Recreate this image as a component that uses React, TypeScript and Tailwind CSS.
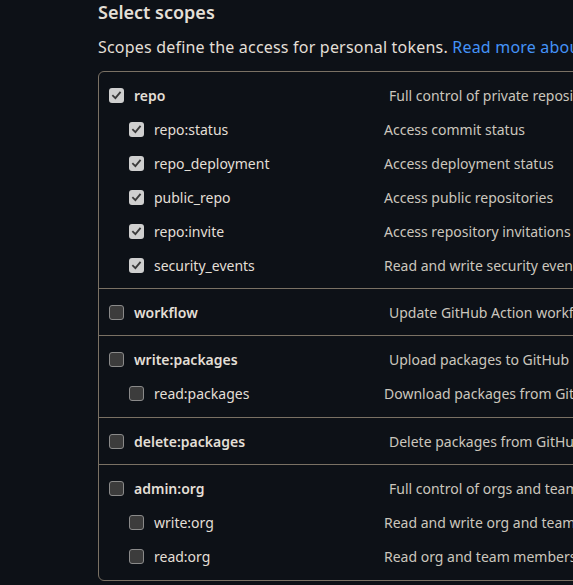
import React from "react";

type Row = { name: string; desc: string; checked: boolean };
type Group = { parent: Row; children: Row[] };

const groups: Group[] = [
  {
    parent: { name: "repo", desc: "Full control of private repositories", checked: true },
    children: [
      { name: "repo:status", desc: "Access commit status", checked: true },
      { name: "repo_deployment", desc: "Access deployment status", checked: true },
      { name: "public_repo", desc: "Access public repositories", checked: true },
      { name: "repo:invite", desc: "Access repository invitations", checked: true },
      { name: "security_events", desc: "Read and write security events", checked: true },
    ],
  },
  {
    parent: { name: "workflow", desc: "Update GitHub Action workflows", checked: false },
    children: [],
  },
  {
    parent: { name: "write:packages", desc: "Upload packages to GitHub Package Registry", checked: false },
    children: [{ name: "read:packages", desc: "Download packages from GitHub Package Registry", checked: false }],
  },
  {
    parent: { name: "delete:packages", desc: "Delete packages from GitHub Package Registry", checked: false },
    children: [],
  },
  {
    parent: { name: "admin:org", desc: "Full control of orgs and teams, read and write org projects", checked: false },
    children: [
      { name: "write:org", desc: "Read and write org and team membership, read and write org projects", checked: false },
      { name: "read:org", desc: "Read org and team membership, read org projects", checked: false },
    ],
  },
];

function Box({ checked }: { checked: boolean }) {
  if (checked) {
    return (
      <span className="flex h-[15px] w-[15px] shrink-0 items-center justify-center rounded-[3px] bg-[#cfcfcf]">
        <svg width="11" height="11" viewBox="0 0 12 12">
          <path d="M2.2 6.3 L4.8 8.9 L9.8 2.8" fill="none" stroke="#3a3a3a" strokeWidth="2" strokeLinecap="square" />
        </svg>
      </span>
    );
  }
  return <span className="h-[15px] w-[15px] shrink-0 rounded-[3px] border border-[#8a8a8a] bg-[#3c3c3c]" />;
}

function ScopeRow({ row, child }: { row: Row; child: boolean }) {
  return (
    <div className={`flex h-[34px] items-center ${child ? "pl-[30px]" : "pl-[10px]"}`}>
      <Box checked={row.checked} />
      <span
        className={`ml-[10px] shrink-0 text-[14px] text-[#e3dfd6] ${child ? "w-[230px] font-normal" : "w-[255px] font-semibold"}`}
      >
        {row.name}
      </span>
      <span className="whitespace-nowrap text-[14px] text-[#cbc6bd]">{row.desc}</span>
    </div>
  );
}

export default function App() {
  return (
    <div
      className="h-[585px] w-[573px] overflow-hidden bg-[#0d1117]"
      style={{ fontFamily: '"Segoe UI", "Noto Sans", "Liberation Sans", sans-serif' }}
    >
      <div className="w-[760px] pl-[98px]">
        <h3 className="text-[18px] font-semibold leading-[24px] text-[#e3dfd6]">Select scopes</h3>
        <p className="mt-[11px] whitespace-nowrap text-[16px] leading-[24px] tracking-[0.2px] text-[#e3dfd6]">
          Scopes define the access for personal tokens.{" "}
          <span className="text-[#4493f8]">Read more about OAuth scopes.</span>
        </p>
        <div className="mt-[12px] rounded-[6px] border border-[#7a7164]">
          {groups.map((g, i) => (
            <div
              key={g.parent.name}
              className={`pt-[6px] ${g.children.length > 0 && i > 0 ? "pb-[7px]" : "pb-[6px]"} ${i > 0 ? "border-t border-[#7a7164]" : ""}`}
            >
              <ScopeRow row={g.parent} child={false} />
              {g.children.map((c) => (
                <ScopeRow key={c.name} row={c} child />
              ))}
            </div>
          ))}
        </div>
      </div>
    </div>
  );
}
